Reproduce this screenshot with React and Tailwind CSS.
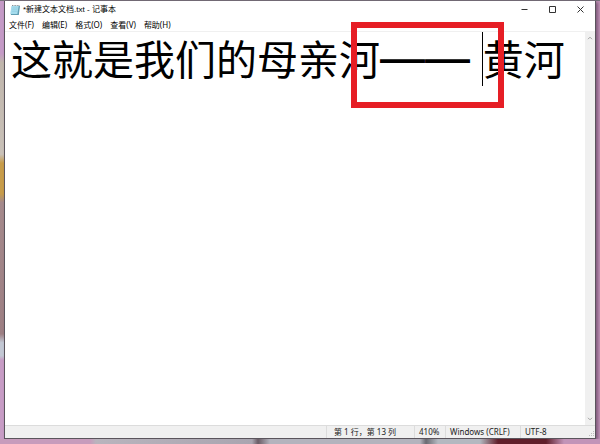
import React from 'react';

const menus = ['文件(F)', '编辑(E)', '格式(O)', '查看(V)', '帮助(H)'];

function NotepadIcon() {
  return (
    <svg className="h-3 w-3" viewBox="0 0 12 12" aria-hidden="true">
      <path d="M3 2h8l-1.200 9h-8z" fill="#5f9db2" />
      <path d="M2.500 2h7.200l-1.300 8h-7.200z" fill="#a5dced" />
      <path d="M3.500 4h5M3.200 5.700h5M2.900 7.400h5" stroke="#8fcbdd" strokeWidth="0.6" />
      <path d="M3 1.500h8" stroke="#8a9398" strokeWidth="1" strokeDasharray="1 0.6" />
    </svg>
  );
}

function TitleBar() {
  return (
    <header className="flex h-[17px] items-center justify-between pl-1">
      <div className="flex items-center gap-0.5">
        <NotepadIcon />
        <h1 className="font-['Liberation_Sans','Noto_Sans_CJK_SC',sans-serif] text-[8px] leading-3 text-black">*新建文本文档.txt - 记事本</h1>
      </div>
      <div className="flex h-4 text-[#333]">
        <button type="button" aria-label="最小化" className="flex w-7 items-center justify-center">
          <svg className="h-2 w-2" viewBox="0 0 8 8" fill="none" stroke="currentColor">
            <path d="M0.500 3.500h6" />
          </svg>
        </button>
        <button type="button" aria-label="最大化" className="flex w-7 items-center justify-center">
          <svg className="h-2 w-2" viewBox="0 0 8 8" fill="none" stroke="currentColor">
            <path d="M0.500 0.500h6v6h-6z" />
          </svg>
        </button>
        <button type="button" aria-label="关闭" className="flex w-7 items-center justify-center">
          <svg className="h-2 w-2" viewBox="0 0 8 8" fill="none" stroke="currentColor">
            <path d="M0.500 0.500l6 6M6.500 0.500l-6 6" />
          </svg>
        </button>
      </div>
    </header>
  );
}

function ScrollBar() {
  return (
    <div className="flex w-[10px] flex-col items-center justify-between bg-[#f0f0f0] py-1 text-[#a0a0a0]">
      <svg className="h-1 w-[6px]" viewBox="0 0 6 4" fill="none" stroke="currentColor" aria-hidden="true">
        <path d="M1 3.200L3 1.200l2 2" />
      </svg>
      <svg className="h-1 w-[6px]" viewBox="0 0 6 4" fill="none" stroke="currentColor" aria-hidden="true">
        <path d="M1 0.800l2 2 2-2" />
      </svg>
    </div>
  );
}

function StatusBar() {
  return (
    <footer className="flex h-[13px] items-center justify-end border-t border-[#dcdcdc] bg-[#f0f0f0] text-[8px] leading-3 text-[#222]">
      <span className="w-[88px] border-l border-[#dcdcdc] pl-[7px]">第 1 行，第 13 列</span>
      <span className="w-[31px] border-l border-[#dcdcdc] pl-1">410%</span>
      <span className="w-[75px] border-l border-[#dcdcdc] pl-1">Windows (CRLF)</span>
      <span className="w-[67px] border-l border-[#dcdcdc] pl-1">UTF-8</span>
      <svg className="h-2 w-2 self-end" viewBox="0 0 8 8" fill="#bdbdbd" aria-hidden="true">
        <path d="M6 1h1v1H6zM4 3h1v1H4zM6 3h1v1H6zM2 5h1v1H2zM4 5h1v1H4zM6 5h1v1H6z" />
      </svg>
    </footer>
  );
}

export default function App() {
  return (
    <div className="flex h-screen flex-col bg-[#c294b8] font-['Noto_Sans','Noto_Sans_CJK_SC',sans-serif]">
      <div className="h-px bg-[#77717a]" />
      <div className="flex min-h-0 flex-1">
        <div className="w-1 bg-[linear-gradient(#c49ac6_0%,#c49ac6_12%,#c0b6ac_14%,#c9c1b8_35%,#c79c4a_37%,#c79c4a_44%,#a58a8c_46%,#9d7f83_76%,#c3c8d4_78%,#c3c8d4_81%,#c79cc5_82%)]" />
        <main className="flex min-w-0 flex-1 flex-col border-x border-b border-[#5a545c] bg-white shadow-[2px_1px_3px_rgba(60,30,60,0.5)]">
          <TitleBar />
          <nav className="flex h-[14px] items-center gap-2 border-b border-[#f0f0f0] pl-1 text-[8px] leading-3 text-black">
            {menus.map((name) => (
              <button key={name} type="button">{name}</button>
            ))}
          </nav>
          <div className="relative flex min-h-0 flex-1">
            <div
              role="textbox"
              aria-multiline="true"
              aria-label="文本编辑区"
              contentEditable
              suppressContentEditableWarning
              spellCheck={false}
              className="min-w-0 flex-1 overflow-hidden pl-[6px] font-['Inter','Noto_Sans_CJK_SC',sans-serif] text-[41px] leading-[56px] text-black outline-none"
            >
              这就是我们的母亲河<span className="text-[45px] leading-none">——&nbsp;</span>黄河
            </div>
            <ScrollBar />
            <span className="absolute top-0 left-[477px] h-[54px] w-px bg-black" />
            <span className="absolute -top-[10px] left-[346px] h-[86px] w-[153px] border-[6px] border-[#e61e25]" />
          </div>
          <StatusBar />
        </main>
        <div className="w-1" />
      </div>
      <div className="h-[5px] bg-[linear-gradient(90deg,#c79cbc_0%,#c79cbc_15%,#b9b4bd_16%,#a9a5b0_42%,#6a5c66_43%,#b3b3bd_45%,#b3b3bd_70%,#6a6a72_71%,#b3b8c0_73%,#b3b8c0_80%,#601f2b_83%,#601f2b_91%,#c294b8_94%)]" />
    </div>
  );
}
